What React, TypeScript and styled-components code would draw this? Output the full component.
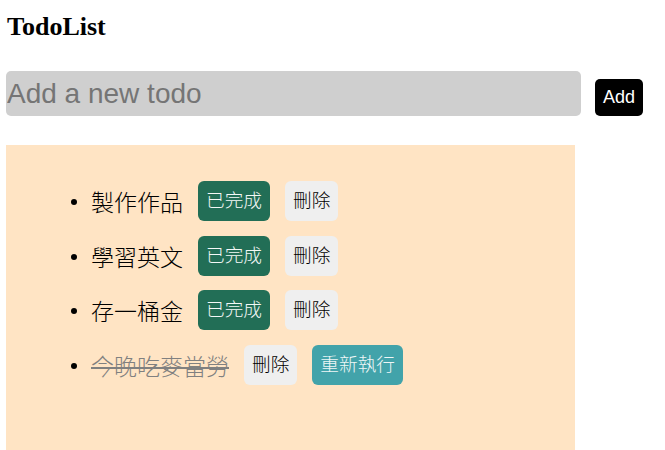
import React from "react";
import styled, { createGlobalStyle } from "styled-components";

const GlobalStyle = createGlobalStyle`
  html, body { margin: 0; padding: 0; background: #ffffff; }
  body { font-family: "Liberation Sans", "Noto Sans CJK TC", sans-serif; }
`;

const Page = styled.div`
  padding: 12px 6px 0 6px;
  display: flex;
  flex-direction: column;
`;

const Title = styled.h1`
  margin: 0 0 0 1px;
  font-family: "Liberation Serif", "Times New Roman", serif;
  font-size: 26px;
  font-weight: bold;
  line-height: normal;
  color: #000;
`;

const InputRow = styled.form`
  margin-top: 29px;
  display: flex;
  align-items: baseline;
  gap: 14px;
`;

const TodoInput = styled.input`
  width: 575px;
  height: 45px;
  box-sizing: border-box;
  border: none;
  border-radius: 5px;
  background: #cfcfcf;
  padding: 0 1px;
  font-family: "Liberation Sans", Arial, sans-serif;
  font-size: 28px;
  color: #222;
  outline: none;
  &::placeholder { color: #757575; }
`;

const AddButton = styled.button`
  border: none;
  border-radius: 5px;
  background: #000;
  color: #fff;
  font-family: "Liberation Sans", Arial, sans-serif;
  font-size: 18px;
  line-height: normal;
  padding: 8px;
  cursor: pointer;
`;

const Panel = styled.div`
  margin-top: 29px;
  width: 569px;
  min-height: 340px;
  background: #ffe4c4;
  padding: 36px 0 0 65px;
  box-sizing: border-box;
`;

const List = styled.ul`
  list-style: none;
  margin: 0;
  padding: 0;
  display: flex;
  flex-direction: column;
  gap: 14.67px;
`;

const Item = styled.li`
  display: flex;
  align-items: center;
  height: 40px;
  gap: 15px;
  &::before {
    content: "";
    width: 6px;
    height: 6px;
    border-radius: 50%;
    background: #000;
    margin-right: -1px;
    align-self: center;
    transform: translateY(1px);
  }
`;

const Label = styled.span<{ $done: boolean }>`
  font-family: "Liberation Sans", "Noto Sans CJK TC", sans-serif;
  font-size: 23px;
  font-weight: 300;
  line-height: normal;
  color: ${(p) => (p.$done ? "#808080" : "#000")};
  text-decoration: ${(p) => (p.$done ? "line-through" : "none")};
  text-decoration-thickness: 2px;
`;

type Variant = "done" | "delete" | "redo";

const colors: Record<Variant, { bg: string; fg: string }> = {
  done: { bg: "#226e56", fg: "#f4f8f6" },
  delete: { bg: "#efefef", fg: "#000" },
  redo: { bg: "#42a3aa", fg: "#eef6f6" },
};

const ActionButton = styled.button<{ $variant: Variant }>`
  border: none;
  border-radius: 6px;
  background: ${(p) => colors[p.$variant].bg};
  color: ${(p) => colors[p.$variant].fg};
  font-family: "Liberation Sans", "Noto Sans CJK TC", sans-serif;
  font-size: 18.67px;
  font-weight: 300;
  line-height: 26px;
  padding: 7px 8px;
  cursor: pointer;
`;

const todos = [
  { text: "製作作品", done: false },
  { text: "學習英文", done: false },
  { text: "存一桶金", done: false },
  { text: "今晚吃麥當勞", done: true },
];

export default function App() {
  return (
    <>
      <GlobalStyle />
      <Page>
        <Title>TodoList</Title>
        <InputRow onSubmit={(e) => e.preventDefault()}>
          <TodoInput placeholder="Add a new todo" />
          <AddButton type="submit">Add</AddButton>
        </InputRow>
        <Panel>
          <List>
            {todos.map((t) => (
              <Item key={t.text}>
                <Label $done={t.done}>{t.text}</Label>
                {t.done ? (
                  <>
                    <ActionButton $variant="delete">刪除</ActionButton>
                    <ActionButton $variant="redo">重新執行</ActionButton>
                  </>
                ) : (
                  <>
                    <ActionButton $variant="done">已完成</ActionButton>
                    <ActionButton $variant="delete">刪除</ActionButton>
                  </>
                )}
              </Item>
            ))}
          </List>
        </Panel>
      </Page>
    </>
  );
}
